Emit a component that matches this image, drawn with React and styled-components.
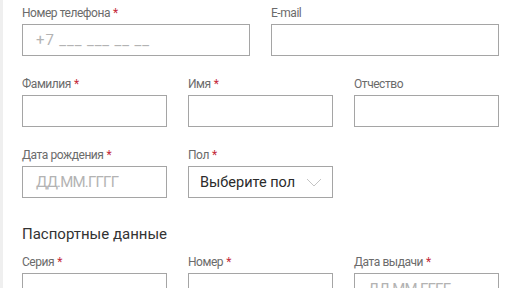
import * as React from 'react';
import styled, { createGlobalStyle } from 'styled-components';

const Global = createGlobalStyle`
  html, body {
    margin: 0;
    padding: 0;
    background: #fff;
  }
  body {
    font-family: Roboto, "Liberation Sans", sans-serif;
    overflow: hidden;
  }
`;

const Page = styled.div`
  width: 514px;
  height: 288px;
  display: flex;
  overflow: hidden;
`;

const Strip = styled.div`
  width: 3px;
  flex: none;
  background: #efefef;
`;

const Content = styled.div`
  flex: 1;
  display: flex;
  flex-direction: column;
`;

const Block = styled.div`
  padding: ${(p) => p.$pad || '0 15px 0 19px'};
  display: flex;
  flex-direction: column;
  gap: 20px;
`;

const Row = styled.div`
  display: grid;
  grid-template-columns: ${(p) => (p.$cols === 2 ? '228px 228px' : '145px 145px 145px')};
  column-gap: 21px;
`;

const Field = styled.div`
  display: flex;
  flex-direction: column;
`;

const Label = styled.div`
  font-size: 12px;
  line-height: 16px;
  height: 16px;
  color: #6b6b6b;
  letter-spacing: -0.45px;
  margin-bottom: 3px;
  white-space: nowrap;
`;

const Star = styled.span`
  color: #c4293a;
  margin-left: 3px;
`;

const Box = styled.div`
  box-sizing: border-box;
  height: 32px;
  border: 1px solid #a5a5a5;
  display: flex;
  align-items: center;
  justify-content: space-between;
  padding: 0 ${(p) => (p.$select ? '10px' : '13px')} 0 ${(p) => (p.$select ? '11px' : '13px')};
  white-space: nowrap;
`;

const Placeholder = styled.span`
  font-size: ${(p) => (p.$dark ? '14.5px' : '15px')};
  color: ${(p) => (p.$dark ? '#2b2b2b' : '#b3b3b3')};
  letter-spacing: ${(p) => p.$spacing || '0'};
`;

const Divider = styled.div`
  height: 1px;
  background: #e9e9e9;
  margin: 14px 0 13px;
`;

const Title = styled.div`
  font-size: 15px;
  line-height: 18px;
  color: #333;
  padding-left: 19px;
  margin-bottom: 11px;
`;

const Chevron = () => (
  <svg width="16" height="9" viewBox="0 0 16 9">
    <path d="M1 1 L8 8 L15 1" fill="none" stroke="#c4c4c4" strokeWidth="1" />
  </svg>
);

function Input({ label, required, placeholder, dark, select, spacing }) {
  return (
    <Field>
      <Label>
        {label}
        {required && <Star>*</Star>}
      </Label>
      <Box $select={select}>
        <Placeholder $dark={dark} $spacing={spacing}>{placeholder}</Placeholder>
        {select && <Chevron />}
      </Box>
    </Field>
  );
}

export default function App() {
  return (
    <Page>
      <Global />
      <Strip />
      <Content>
        <Block $pad="5px 15px 0 19px">
          <Row $cols={2}>
            <Input label="Номер телефона" required placeholder="+7 ___ ___ __ __" spacing="0.9px" />
            <Input label="E-mail" />
          </Row>
          <Row>
            <Input label="Фамилия" required />
            <Input label="Имя" required />
            <Input label="Отчество" />
          </Row>
          <Row>
            <Input label="Дата рождения" required placeholder="ДД.ММ.ГГГГ" spacing="-0.8px" />
            <Input label="Пол" required placeholder="Выберите пол" dark select />
          </Row>
        </Block>
        <Divider />
        <Title>Паспортные данные</Title>
        <Block>
          <Row>
            <Input label="Серия" required />
            <Input label="Номер" required />
            <Input label="Дата выдачи" required placeholder="ДД.ММ.ГГГГ" spacing="-0.8px" />
          </Row>
        </Block>
      </Content>
    </Page>
  );
}
